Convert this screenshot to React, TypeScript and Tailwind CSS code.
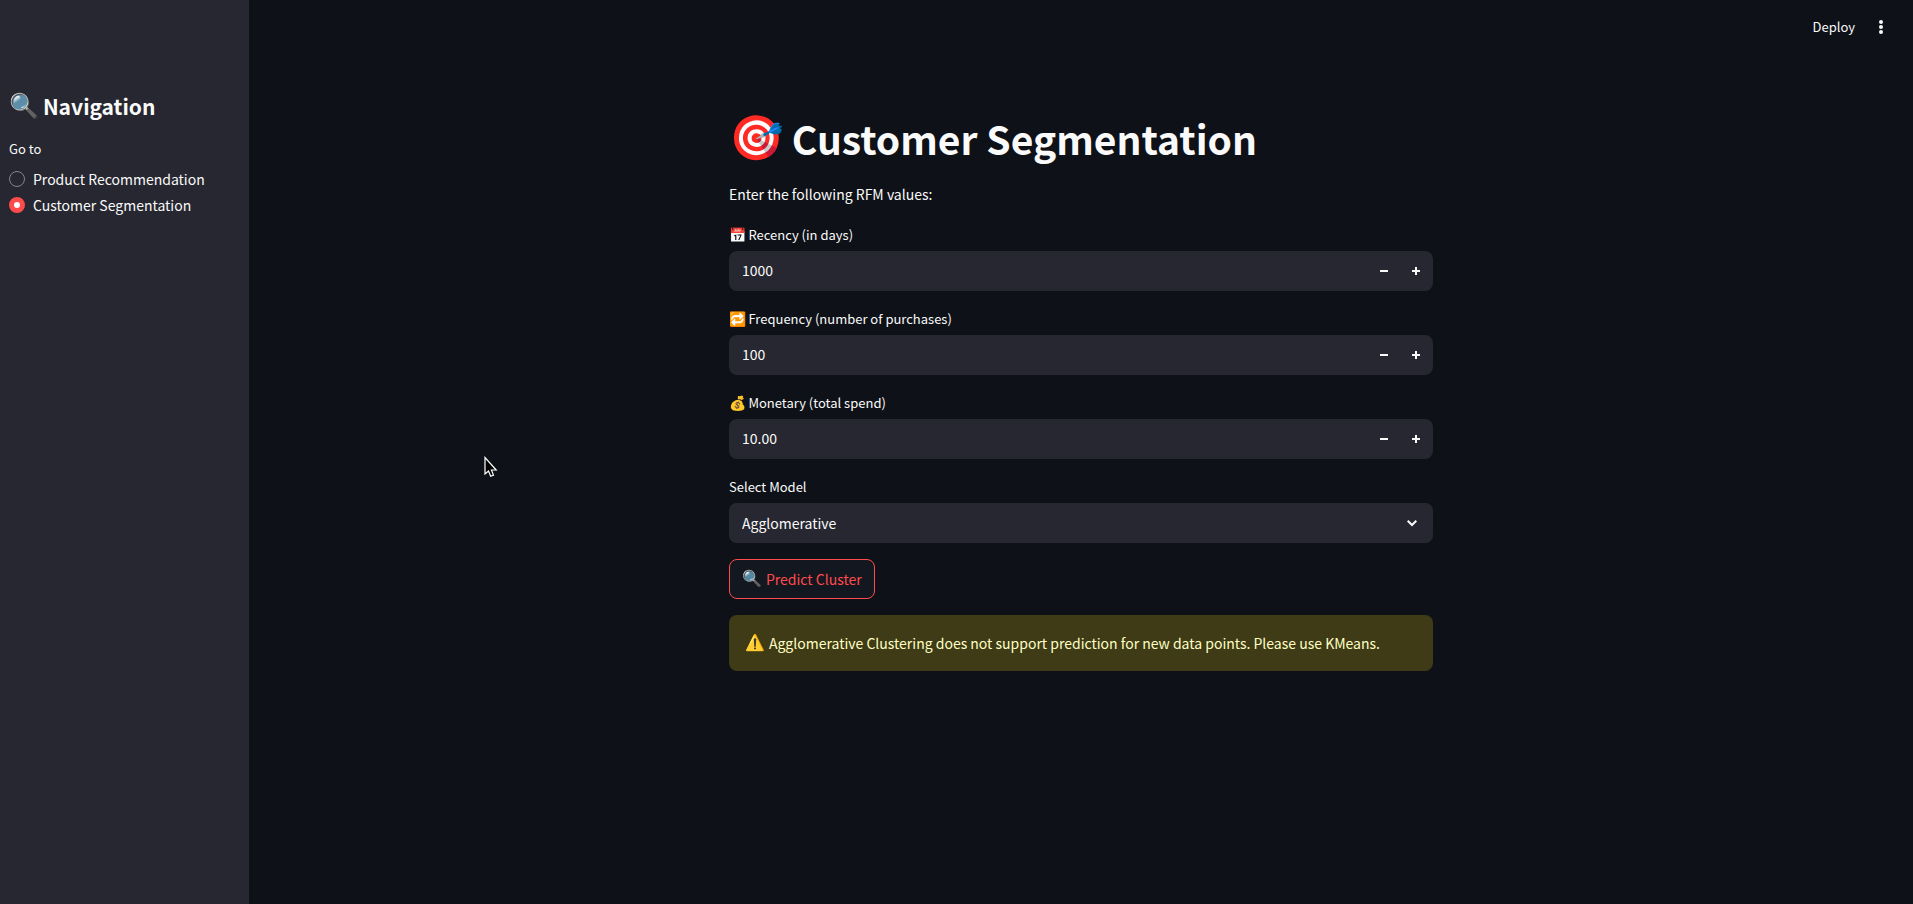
import { useState } from "react";
import type { ReactNode } from "react";

const pages = ["Product Recommendation", "Customer Segmentation"];

function Emoji({ children, className }: { children: ReactNode; className: string }) {
  return (
    <span aria-hidden="true" className={`font-['Noto_Color_Emoji',sans-serif] ${className}`}>
      {children}
    </span>
  );
}

function Sidebar() {
  const [page, setPage] = useState(pages[1]);
  return (
    <aside className="w-[249px] shrink-0 bg-[#262730] px-[9px] pt-[88px]">
      <h2 className="flex h-9 items-center gap-1 text-[21px] font-bold">
        <Emoji className="text-[24px]">🔍</Emoji>
        Navigation
      </h2>
      <fieldset className="mt-[15px]">
        <legend className="h-5 text-[13px] leading-5">Go to</legend>
        <div className="mt-2 flex flex-col gap-0.5">
          {pages.map((name) => (
            <label key={name} className="flex h-6 items-center gap-2">
              <input
                type="radio"
                name="page"
                checked={page === name}
                onChange={() => setPage(name)}
                className="size-4 appearance-none rounded-full border border-[#83848a] checked:border-5 checked:border-[#ff4b4b] checked:bg-white"
              />
              {name}
            </label>
          ))}
        </div>
      </fieldset>
    </aside>
  );
}

function NumberField({
  id,
  icon,
  label,
  initial,
  digits = 0,
}: {
  id: string;
  icon: string;
  label: string;
  initial: number;
  digits?: number;
}) {
  const [value, setValue] = useState(initial.toFixed(digits));
  const step = (by: number) => setValue((Number(value) + by).toFixed(digits));
  return (
    <div>
      <label htmlFor={id} className="flex h-6 items-start gap-0.5 text-[13px] leading-4">
        <Emoji className="text-[14px]">{icon}</Emoji>
        {label}
      </label>
      <div className="flex h-10 overflow-hidden rounded-lg bg-[#262730]">
        <input
          id={id}
          type="number"
          value={value}
          onChange={(e) => setValue(e.target.value)}
          className="min-w-0 grow bg-transparent px-[13px] pb-0.5 outline-none [appearance:textfield]"
        />
        <button
          type="button"
          aria-label="Decrease"
          onClick={() => step(-1)}
          className="flex w-8 items-center justify-center"
        >
          <svg width="8" height="8" viewBox="0 0 8 8" fill="currentColor">
            <path d="M0 3h8v2H0z" />
          </svg>
        </button>
        <button
          type="button"
          aria-label="Increase"
          onClick={() => step(1)}
          className="mr-px flex w-8 items-center justify-center"
        >
          <svg width="8" height="8" viewBox="0 0 8 8" fill="currentColor">
            <path d="M3 0h2v3h3v2H5v3H3V5H0V3h3z" />
          </svg>
        </button>
      </div>
    </div>
  );
}

function ModelSelect() {
  return (
    <div>
      <label htmlFor="model" className="block h-6 text-[13px] leading-4">
        Select Model
      </label>
      <div className="relative flex h-10 rounded-lg bg-[#262730]">
        <select
          id="model"
          defaultValue="Agglomerative"
          className="w-full appearance-none rounded-lg bg-[#262730] px-[13px] outline-none"
        >
          <option>KMeans</option>
          <option>Agglomerative</option>
        </select>
        <svg
          className="pointer-events-none absolute top-3 right-3"
          width="18"
          height="16"
          viewBox="0 0 18 16"
          fill="none"
          stroke="currentColor"
          strokeWidth="2"
        >
          <path d="M4.7 5.7 9 10l4.3-4.3" />
        </svg>
      </div>
    </div>
  );
}

export default function App() {
  return (
    <div className="relative flex min-h-screen bg-[#0e1117] font-['Noto_Sans_CJK_SC',sans-serif] text-[14px] leading-6 text-[#fafafa]">
      <Sidebar />
      <div className="flex min-w-0 grow flex-col">
        <header className="flex h-[60px] items-center justify-end gap-2.5 pr-5 pb-1.5">
          <button type="button" className="px-1 text-[13px]">
            Deploy
          </button>
          <button type="button" aria-label="Menu" className="flex w-6 justify-center">
            <svg width="4" height="14" viewBox="0 0 4 14" fill="currentColor">
              <circle cx="2" cy="2" r="2" />
              <circle cx="2" cy="7" r="2" />
              <circle cx="2" cy="12" r="2" />
            </svg>
          </button>
        </header>
        <main className="mx-auto w-full max-w-[704px] pt-[50px]">
          <h1 className="flex h-14 items-center gap-2 text-[39px] font-bold">
            <Emoji className="text-[44px]">🎯</Emoji>
            Customer Segmentation
          </h1>
          <p className="mt-4">Enter the following RFM values:</p>
          <form className="mt-[21px] flex flex-col gap-5" onSubmit={(e) => e.preventDefault()}>
            <NumberField id="recency" icon="📅" label="Recency (in days)" initial={1000} />
            <NumberField
              id="frequency"
              icon="🔁"
              label="Frequency (number of purchases)"
              initial={100}
            />
            <NumberField
              id="monetary"
              icon="💰"
              label="Monetary (total spend)"
              initial={10}
              digits={2}
            />
            <ModelSelect />
            <div className="-mt-1 flex flex-col items-start gap-4">
              <button
                type="submit"
                className="flex h-10 items-center gap-1 rounded-lg border border-[#ff4b4b] bg-[#131720] px-3 text-[#ff4b4b]"
              >
                <Emoji className="text-[16px]">🔍</Emoji>
                Predict Cluster
              </button>
              <div
                role="alert"
                className="flex w-full items-center gap-1 rounded-lg bg-[#3e3b16] p-4 text-[#ffffc2]"
              >
                <Emoji className="text-[16px]">⚠️</Emoji>
                Agglomerative Clustering does not support prediction for new data points. Please use
                KMeans.
              </div>
            </div>
          </form>
        </main>
      </div>
      <svg
        className="pointer-events-none absolute top-[456px] left-[484px]"
        width="14"
        height="22"
        viewBox="0 0 14 22"
        fill="#000"
        stroke="#fff"
        strokeWidth="1.2"
      >
        <path d="M1 1.5v16.5l3.5-3 2.2 5.2 2.8-1.1-2.1-5.1h4.8z" />
      </svg>
    </div>
  );
}
